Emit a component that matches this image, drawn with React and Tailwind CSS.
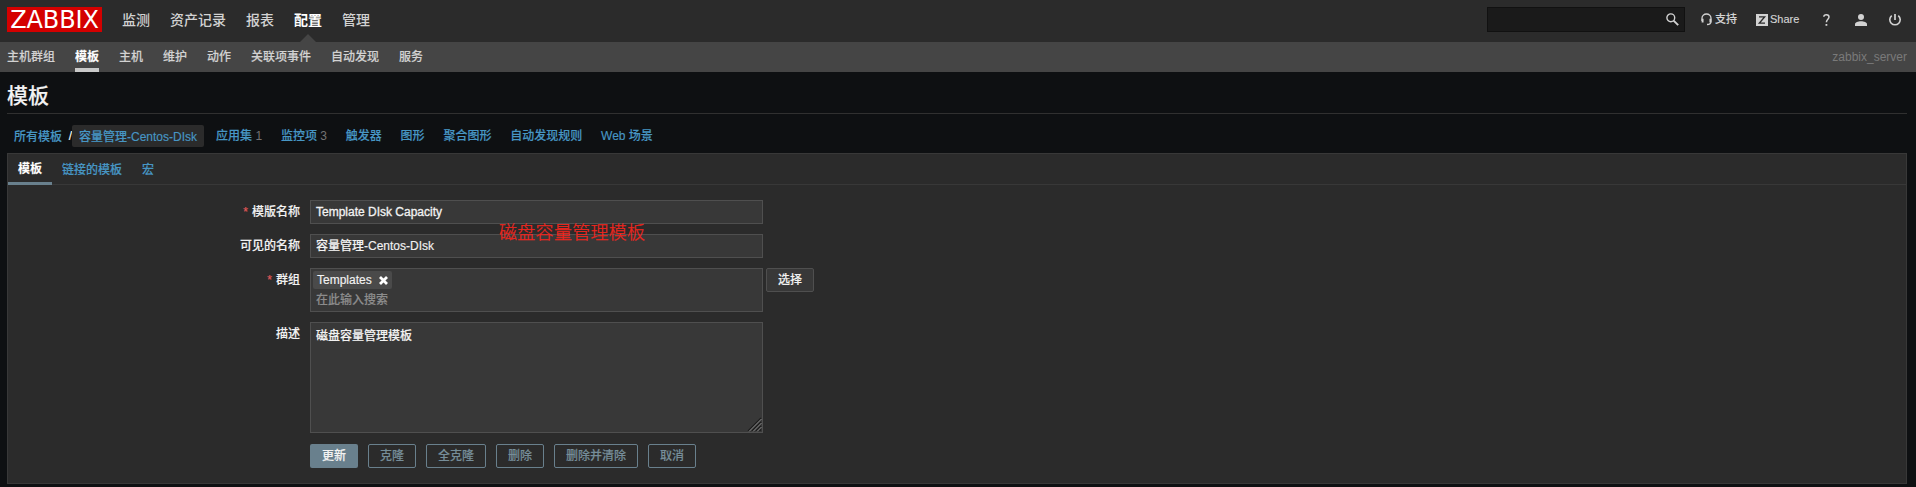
const mainNav = ["监测", "资产记录", "报表", "配置", "管理"];
const subNav = ["主机群组", "模板", "主机", "维护", "动作", "关联项事件", "自动发现", "服务"];
const crumbs = [
  { text: "应用集", count: "1" },
  { text: "监控项", count: "3" },
  { text: "触发器" },
  { text: "图形" },
  { text: "聚合图形" },
  { text: "自动发现规则" },
  { text: "Web 场景" },
];
const actions = ["克隆", "全克隆", "删除", "删除并清除", "取消"];

function Label({ required, children }) {
  return (
    <div className="flex h-6 w-[292px] shrink-0 items-center justify-end gap-1">
      {required && <span className="text-[#e45959]">*</span>}
      <span>{children}</span>
    </div>
  );
}

function Header() {
  return (
    <header className="flex h-[42px] items-start bg-[#2b2b2b] pl-[7px] text-[#d2d2d2]">
      <div className="mt-[7px] flex h-[25px] w-[95px] items-center justify-center bg-[#d40000] font-['DejaVu_Sans',sans-serif] text-[24px] leading-none font-normal tracking-[-0.1px] text-white [-webkit-text-stroke:0px]">
        ZABBIX
      </div>
      <nav className="ml-5 flex h-[42px] gap-5 text-sm [-webkit-text-stroke:0px]">
        {mainNav.map((t) => (
          <div key={t} className="relative flex h-10 items-center">
            <span className={t === "配置" ? "font-bold text-white" : ""}>{t}</span>
            {t === "配置" && (
              <svg className="absolute top-[34px] left-1/2 -ml-2" width="16" height="8" viewBox="0 0 16 8">
                <path d="M0 8L8 0L16 8Z" fill="#454545" />
              </svg>
            )}
          </div>
        ))}
      </nav>
      <div className="mt-[7px] ml-auto flex h-[25px] w-[198px] items-center justify-end border border-[#111] bg-[#1a1a1a] pr-[5px]">
        <svg width="13" height="13" viewBox="0 0 13 13" fill="none" stroke="#d2d2d2">
          <circle cx="4.8" cy="4.8" r="3.9" strokeWidth="1.4" />
          <path d="M7.6 7.6L12.2 12.2" strokeWidth="1.9" />
        </svg>
      </div>
      <div className="ml-4 flex h-[39px] items-center text-[11px]">
        <svg width="11" height="13" viewBox="0 0 11 13" fill="none" stroke="#d2d2d2">
          <path d="M1 8V5.3a4.5 4.3 0 0 1 9 0V8.5c0 2-1.2 3-4 3" strokeWidth="1.3" />
          <path d="M1.6 5.8V9.6M9.4 5.8V9.6" strokeWidth="1.9" />
        </svg>
        <span className="ml-[3px]">支持</span>
        <svg className="ml-[19px]" width="12" height="12" viewBox="0 0 12 12">
          <path d="M0 0H12V12H0Z" fill="#d2d2d2" />
          <path d="M3 2.9H8.6L3.4 9.1H9" fill="none" stroke="#2b2b2b" strokeWidth="1.4" />
        </svg>
        <span className="ml-0.5 w-[29px]">Share</span>
        <svg className="ml-6" width="7" height="12" viewBox="0 0 7 12" fill="none" stroke="#d2d2d2">
          <path d="M.8 2.8C1 .2 6 .1 6 3.1C6 5.2 3.4 5.4 3.4 8.3" strokeWidth="1.5" />
          <path d="M3.4 10V11.8" strokeWidth="1.8" />
        </svg>
        <svg className="ml-[25px]" width="12" height="12" viewBox="0 0 12 12" fill="#d2d2d2">
          <circle cx="6" cy="3" r="3" />
          <path d="M0 12V10.3C0 8.4 3 7.3 6 7.3S12 8.4 12 10.3V12Z" />
        </svg>
        <svg className="mr-[15px] ml-[22px]" width="12" height="12" viewBox="0 0 12 12" fill="none" stroke="#d2d2d2">
          <path d="M2.7 1.6A5.2 5.2 0 1 0 9.3 1.6" strokeWidth="1.6" />
          <path d="M6 0V6" strokeWidth="1.7" />
        </svg>
      </div>
    </header>
  );
}

export default function App() {
  return (
    <div className="flex h-[487px] flex-col overflow-hidden bg-[#0e1012] font-['Liberation_Sans','Noto_Sans_CJK_SC',sans-serif] text-xs font-medium text-[#f2f2f2] [-webkit-text-stroke:0.15px]">
      <Header />
      <nav className="flex h-[30px] shrink-0 gap-5 bg-[#454545] pr-[9px] pl-[7px] text-[#d2d2d2]">
        {subNav.map((t) => (
          <div
            key={t}
            className={
              "flex h-[30px] items-center border-b-4 " +
              (t === "模板" ? "border-[#c9c9c9] font-bold text-white" : "border-transparent")
            }
          >
            <span className="mt-1">{t}</span>
          </div>
        ))}
        <div className="ml-auto flex h-[30px] items-center font-normal text-[#7a7a7a] [-webkit-text-stroke:0px]">
          zabbix_server
        </div>
      </nav>

      <main className="pr-[9px] pl-[7px]">
        <h1 className="flex h-[42px] items-center border-b border-[#303030] pt-1.5 text-[21px] font-medium">模板</h1>

        <div className="flex h-[39px] items-start pt-[11px] text-[#4796c4]">
          <div className="flex h-[23px] items-center pl-[7px]">所有模板</div>
          <div className="flex h-[22px] w-[10px] items-center justify-end text-white">/</div>
          <div className="flex h-[22px] w-[132px] items-center justify-center rounded-xs bg-[#2b2b2b] pt-px">
            容量管理-Centos-DIsk
          </div>
          <div className="ml-3 flex h-[21px] items-center gap-[19px]">
            {crumbs.map((c) => (
              <div key={c.text} className="-mr-[0.2px] whitespace-pre">
                {c.text}
                {c.count && <span className="font-normal text-[#737373] [-webkit-text-stroke:0px]"> {c.count}</span>}
              </div>
            ))}
          </div>
        </div>

        <section className="relative h-[331px] border border-[#383838] bg-[#2b2b2b]">
          <div className="flex h-[31px] border-b border-[#383838]">
            <div className="flex h-[31px] w-[44px] items-center justify-center border-b-3 border-[#69808d] pt-0.5 font-bold text-white">
              模板
            </div>
            <div className="ml-2.5 flex h-[31px] items-center text-[#4796c4]">链接的模板</div>
            <div className="ml-5 flex h-[31px] items-center text-[#4796c4]">宏</div>
          </div>

          <div className="flex flex-col gap-2.5 pt-[15px]">
            <div className="flex gap-2.5">
              <Label required>模版名称</Label>
              <div className="flex h-6 w-[453px] items-center border border-[#4f4f4f] bg-[#383838] px-[5px] [-webkit-text-stroke:0.3px]">
                Template DIsk Capacity
              </div>
            </div>
            <div className="flex gap-2.5">
              <Label>可见的名称</Label>
              <div className="flex h-6 w-[453px] items-center border border-[#4f4f4f] bg-[#383838] px-[5px]">
                容量管理-Centos-DIsk
              </div>
            </div>
            <div className="flex">
              <Label required>群组</Label>
              <div className="ml-2.5 flex h-11 w-[453px] flex-col items-start border border-[#4f4f4f] bg-[#383838] px-0.5 pt-0.5">
                <div className="flex h-[18px] w-[79px] items-center justify-between rounded-xs bg-[#4a4a4a] px-1">
                  <span>Templates</span>
                  <svg width="9" height="9" viewBox="0 0 9 9" stroke="#fff" strokeWidth="2.8">
                    <path d="M1 1L8 8M8 1L1 8" />
                  </svg>
                </div>
                <div className="flex h-[22px] items-center pl-[3px] text-[#8c8c8c]">在此输入搜索</div>
              </div>
              <button className="ml-[3px] h-6 w-12 rounded-xs border border-[#4f4f4f] bg-[#383838]">选择</button>
            </div>
            <div className="flex gap-2.5">
              <Label>描述</Label>
              <div className="flex h-[111px] w-[453px] items-start justify-between border border-[#4f4f4f] bg-[#383838] pl-[5px]">
                <span className="flex h-[26px] items-center">磁盘容量管理模板</span>
                <svg className="self-end" width="15" height="15" viewBox="0 0 15 15">
                  <path d="M1 14L14 1M5 14L14 5M9 14L14 9M12.5 14L14 12.5" stroke="#1c1c1c" strokeWidth="1.2" />
                  <path d="M2 14.5L14.5 2M6 14.5L14.5 6M10 14.5L14.5 10" stroke="#a0a0a0" strokeWidth=".8" />
                </svg>
              </div>
            </div>
            <div className="mt-px flex gap-2.5 pl-[302px]">
              <button className="h-6 rounded-xs bg-[#69808d] px-3">更新</button>
              {actions.map((t) => (
                <button key={t} className="h-6 rounded-xs border border-[#69808d] px-[11px] text-[#768d99]">
                  {t}
                </button>
              ))}
            </div>
          </div>

          <div className="absolute top-[66px] left-[491px] text-[18px] leading-[26px] font-light tracking-[0.3px] whitespace-nowrap text-[#f0261e] [-webkit-text-stroke:0.25px]">
            磁盘容量管理模板
          </div>
        </section>
      </main>
    </div>
  );
}
